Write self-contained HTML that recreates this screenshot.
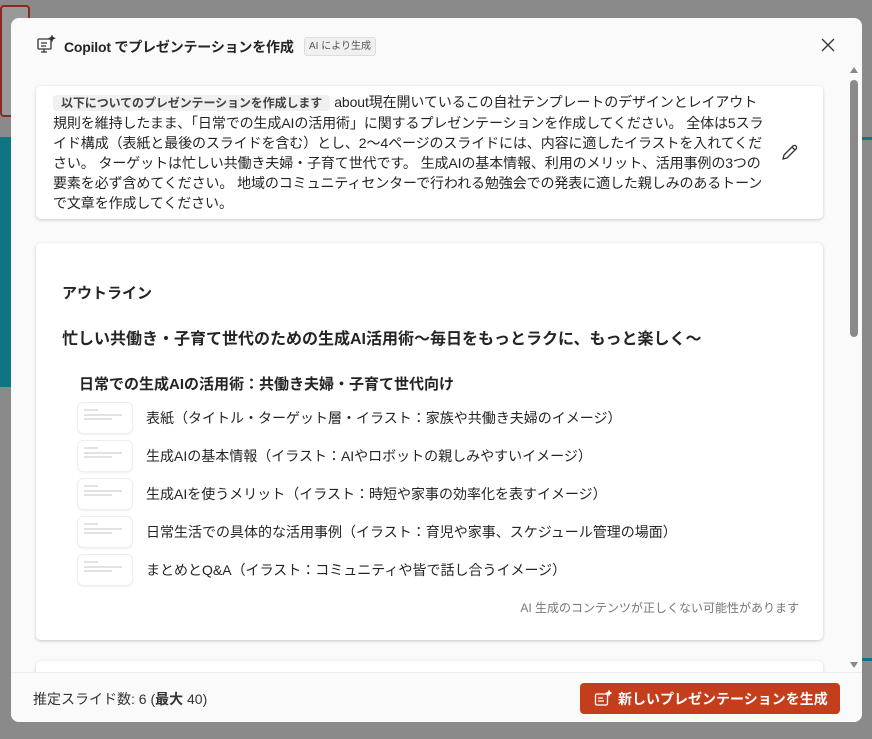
<!DOCTYPE html>
<html><head><meta charset="utf-8"><style>
*{margin:0;padding:0;box-sizing:border-box}
body{width:872px;height:739px;background:#8a8a8a;font-family:"Liberation Sans","Noto Sans CJK JP",sans-serif;position:relative;overflow:hidden;color:#242424}
.dlg{position:absolute;left:11px;top:18px;width:851px;height:704px;background:#fafafa;border-radius:8px;overflow:hidden}
.card{position:absolute;background:#fff;border-radius:5px;box-shadow:0 1px 3px rgba(0,0,0,.2)}
.item{position:absolute;left:67px;height:30px;font-size:14px;display:flex;align-items:center}
.th{width:54px;height:30px;border-radius:5px;background:#fff;box-shadow:0 0 0 1px #eee,0 1px 2px rgba(0,0,0,.15);margin-right:14px;position:relative}
.th i{position:absolute;left:6px;height:1.5px;background:#e2e2e2}
</style></head><body>
<div style="position:absolute;left:0;top:5px;width:30px;height:112px;border:2px solid #8b2a1e;border-radius:4px;background:#999"></div>
<div style="position:absolute;left:0;top:137px;width:11px;height:250px;background:#0e7585"></div>
<div style="position:absolute;left:862px;top:137px;width:10px;height:3px;background:#0e7585"></div>
<div style="position:absolute;left:862px;top:658px;width:10px;height:3px;background:#0e7585"></div>
<div class="dlg">
 <svg style="position:absolute;left:25px;top:17px" width="20" height="20" viewBox="0 0 20 20" fill="none" stroke="#333" stroke-width="1.3"><rect x="2" y="4" width="13" height="10" rx="1"/><path d="M5 8h6M5 11h5M8 14v3M5 17h6"/><path d="M16 1l.7 1.6 1.6.7-1.6.7L16 5.6l-.7-1.6-1.6-.7 1.6-.7z" fill="#333"/></svg>
 <div style="position:absolute;left:53px;top:19px;font-size:14px;font-weight:bold;letter-spacing:-0.2px">Copilot でプレゼンテーションを作成</div>
 <div style="position:absolute;left:293px;top:19px;height:19px;padding:0 4px;font-size:10px;line-height:18px;color:#555;background:#f0f0f0;border:1px solid #ddd;border-radius:3px">AI により生成</div>
 <svg style="position:absolute;left:810px;top:20px" width="14" height="14" viewBox="0 0 14 14" stroke="#333" stroke-width="1.3"><path d="M1 1l12 12M13 1L1 13"/></svg>
 <div class="card" style="left:25px;top:68px;width:787px;height:133px">
  <div style="position:absolute;left:17px;top:6px;width:712px;font-size:14px;line-height:20px;letter-spacing:-0.1px">
   <span style="background:#f0f0f0;border-radius:4px;padding:1px 8px;font-size:12px;font-weight:bold;color:#444;margin-right:4px">以下についてのプレゼンテーションを作成します</span>about現在開いているこの自社テンプレートのデザインとレイアウト規則を維持したまま、「日常での生成AIの活用術」に関するプレゼンテーションを作成してください。 全体は5スライド構成（表紙と最後のスライドを含む）とし、2〜4ページのスライドには、内容に適したイラストを入れてください。 ターゲットは忙しい共働き夫婦・子育て世代です。 生成AIの基本情報、利用のメリット、活用事例の3つの要素を必ず含めてください。 地域のコミュニティセンターで行われる勉強会での発表に適した親しみのあるトーンで文章を作成してください。
  </div>
  <svg style="position:absolute;left:745px;top:57px" width="18" height="18" viewBox="0 0 18 18" fill="none" stroke="#333" stroke-width="1.3"><path d="M2 16l1-4L12 3a2 2 0 013 3l-9 9z M11 4l3 3"/></svg>
 </div>
 <div class="card" style="left:25px;top:225px;width:787px;height:397px">
  <div style="position:absolute;left:26px;top:39px;font-size:15px;font-weight:bold">アウトライン</div>
  <div style="position:absolute;left:26px;top:82px;font-size:16px;font-weight:bold">忙しい共働き・子育て世代のための生成AI活用術〜毎日をもっとラクに、もっと楽しく〜</div>
  <div style="position:absolute;left:43px;top:130px;font-size:15px;font-weight:bold">日常での生成AIの活用術：共働き夫婦・子育て世代向け</div>
  <div class="item" style="top:160px;left:42px"><div class="th"><i style="top:6px;width:14px"></i><i style="top:11px;width:38px"></i><i style="top:15px;width:28px"></i></div>表紙（タイトル・ターゲット層・イラスト：家族や共働き夫婦のイメージ）</div>
  <div class="item" style="top:198px;left:42px"><div class="th"><i style="top:6px;width:14px"></i><i style="top:11px;width:38px"></i><i style="top:15px;width:28px"></i></div>生成AIの基本情報（イラスト：AIやロボットの親しみやすいイメージ）</div>
  <div class="item" style="top:236px;left:42px"><div class="th"><i style="top:6px;width:14px"></i><i style="top:11px;width:38px"></i><i style="top:15px;width:28px"></i></div>生成AIを使うメリット（イラスト：時短や家事の効率化を表すイメージ）</div>
  <div class="item" style="top:274px;left:42px"><div class="th"><i style="top:6px;width:14px"></i><i style="top:11px;width:38px"></i><i style="top:15px;width:28px"></i></div>日常生活での具体的な活用事例（イラスト：育児や家事、スケジュール管理の場面）</div>
  <div class="item" style="top:312px;left:42px"><div class="th"><i style="top:6px;width:14px"></i><i style="top:11px;width:38px"></i><i style="top:15px;width:28px"></i></div>まとめとQ&amp;A（イラスト：コミュニティや皆で話し合うイメージ）</div>
  <div style="position:absolute;right:24px;top:356px;font-size:12px;color:#777">AI 生成のコンテンツが正しくない可能性があります</div>
 </div>
 <div class="card" style="left:25px;top:643px;width:787px;height:40px"></div>
 <div style="position:absolute;left:0;top:654px;width:851px;height:50px;background:#fafafa;border-top:1px solid #eee"></div>
 <div style="position:absolute;left:22px;top:671px;font-size:14px;color:#333">推定スライド数: 6 (<b>最大</b> 40)</div>
 <div style="position:absolute;left:569px;top:665px;width:260px;height:31px;background:#c43e1c;border-radius:4px;color:#fff;font-size:14px;font-weight:bold;display:flex;align-items:center;padding-left:38px">新しいプレゼンテーションを生成</div>
 <svg style="position:absolute;left:583px;top:672px" width="18" height="18" viewBox="0 0 18 18" fill="none" stroke="#fff" stroke-width="1.3"><rect x="1.5" y="4" width="12" height="11" rx="1.5"/><path d="M4 8h5M4 11h6"/><path d="M15 1l.6 1.4 1.4.6-1.4.6L15 5l-.6-1.4L13 3l1.4-.6z" fill="#fff"/></svg>
 <div style="position:absolute;left:839px;top:49px;width:0;height:0;border-left:4px solid transparent;border-right:4px solid transparent;border-bottom:6px solid #888"></div>
 <div style="position:absolute;left:839px;top:62px;width:8px;height:257px;background:#8a8a8a;border-radius:4px"></div>
 <div style="position:absolute;left:839px;top:644px;width:0;height:0;border-left:4px solid transparent;border-right:4px solid transparent;border-top:6px solid #888"></div>
</div>
</body></html>
